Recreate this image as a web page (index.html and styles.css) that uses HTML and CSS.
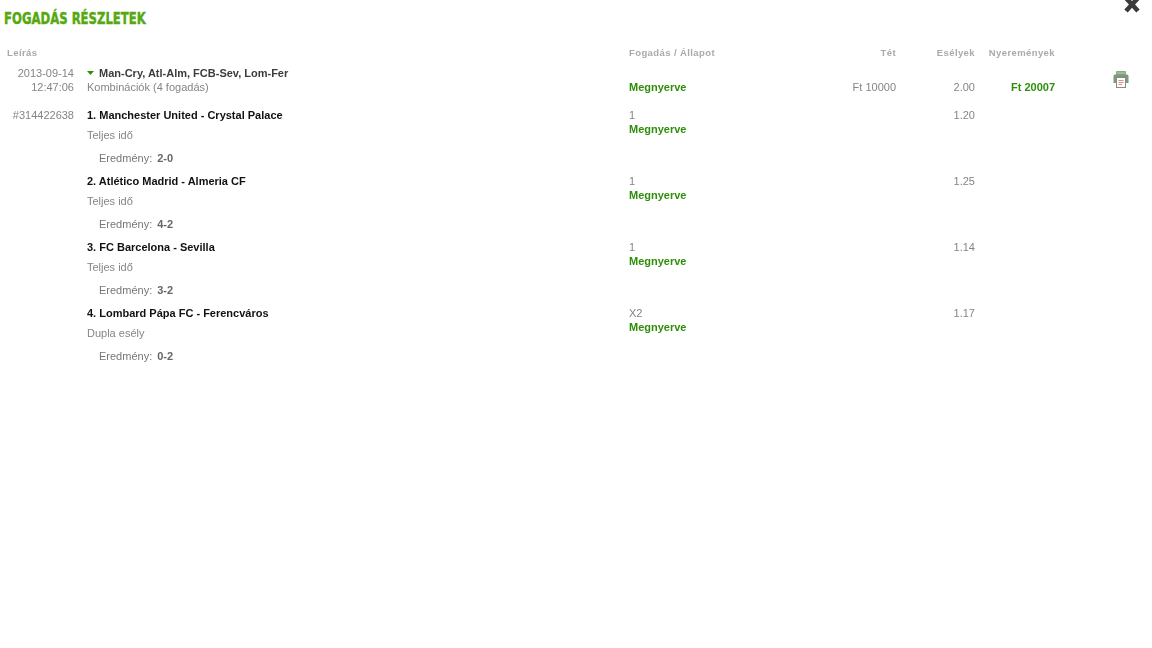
FILE: index.html
```html
<!DOCTYPE html>
<html lang="hu">
<head>
<meta charset="utf-8">
<title>Fogadás részletek</title>
<link rel="stylesheet" href="styles.css">
</head>
<body>
<div class="close"><svg width="16" height="13" viewBox="0 0 16 13"><path d="M2 -2L14 11M14 -2L2 11" stroke="#3a3a3a" stroke-width="4.6" fill="none"/></svg></div>
<h1 class="title"><span class="title-text">FOGADÁS RÉSZLETEK</span></h1>
<div class="grid head">
  <div class="c-a lh">Leírás</div><div></div>
  <div class="lh">Fogadás / Állapot</div>
  <div class="lh r">Tét</div><div class="lh r">Esélyek</div><div class="lh r">Nyeremények</div><div></div>
</div>
<div class="grid summary">
  <div class="r t">2013-09-14<br>12:47:06</div>
  <div><div class="sumtitle"><svg class="arrow" width="7" height="4" viewBox="0 0 7 4"><path d="M0 0H7L3.5 4Z" fill="#2f8f0a"/></svg>Man-Cry, Atl-Alm, FCB-Sev, Lom-Fer</div><div class="t">Kombinációk (4 fogadás)</div></div>
  <div class="won bottom">Megnyerve</div>
  <div class="r t bottom">Ft 10000</div>
  <div class="r t bottom">2.00</div>
  <div class="r won bottom">Ft 20007</div>
  <div class="printer"><svg width="16" height="17" viewBox="0 0 16 17"><path d="M3.5 0.5H12.5V3.5H3.5Z" fill="#9dbb98" stroke="#7c9a78" stroke-width=".8"/><path d="M0.5 5Q0.5 3.5 2 3.5H14Q15.5 3.5 15.5 5V12H0.5Z" fill="#7b9a77"/><rect x="3.5" y="6.5" width="9" height="10" fill="#fff" stroke="#8a8a8a" stroke-width="1"/><path d="M5.5 9.5H10.5M5.5 11.5H10.5M5.5 13.5H9" stroke="#e08a8d" stroke-width="1"/></svg></div>
</div>
<div class="grid row">
  <div class="r t">#314422638</div>
  <div><div class="ev">1. Manchester United - Crystal Palace</div><div class="t sub">Teljes idő</div><div class="res">Eredmény:<b>2-0</b></div></div>
  <div><div class="t">1</div><div class="won">Megnyerve</div></div>
  <div></div><div class="r t">1.20</div><div></div><div></div>
</div>
<div class="grid row">
  <div></div>
  <div><div class="ev">2. Atlético Madrid - Almeria CF</div><div class="t sub">Teljes idő</div><div class="res">Eredmény:<b>4-2</b></div></div>
  <div><div class="t">1</div><div class="won">Megnyerve</div></div>
  <div></div><div class="r t">1.25</div><div></div><div></div>
</div>
<div class="grid row">
  <div></div>
  <div><div class="ev">3. FC Barcelona - Sevilla</div><div class="t sub">Teljes idő</div><div class="res">Eredmény:<b>3-2</b></div></div>
  <div><div class="t">1</div><div class="won">Megnyerve</div></div>
  <div></div><div class="r t">1.14</div><div></div><div></div>
</div>
<div class="grid row">
  <div></div>
  <div><div class="ev">4. Lombard Pápa FC - Ferencváros</div><div class="t sub">Dupla esély</div><div class="res">Eredmény:<b>0-2</b></div></div>
  <div><div class="t">X2</div><div class="won">Megnyerve</div></div>
  <div></div><div class="r t">1.17</div><div></div><div></div>
</div>
</body>
</html>
```
FILE: styles.css
```css
* { box-sizing: border-box; }
html, body { background: #fff; }
body { margin: 0; height: 648px; overflow: hidden; position: relative; font: 11px/14px "Liberation Sans", Arial, sans-serif; color: #858585; }
.close { position: absolute; left: 1124px; top: 0; line-height: 0; }
.title { margin: 0; padding: 10px 0 0 4px; height: 46px; font: 700 16px/18px "DejaVu Sans", sans-serif; font-stretch: condensed; color: #55a80e; -webkit-text-stroke: .4px #55a80e; }
.title-text { display: inline-block; transform: scaleX(.81); transform-origin: 0 50%; }
.grid { display: grid; grid-template-columns: 74px 542px 213px 67px 79px 80px 1fr; will-change: transform; }
.grid > :nth-child(1) { padding-left: 7px; }
.grid > :nth-child(2) { padding-left: 13px; }
.grid > :nth-child(3) { padding-left: 13px; }
.head { height: 20px; }
.lh { font-size: 9.5px; font-weight: 700; color: #aaa; letter-spacing: .4px; line-height: 14px; }
.r { text-align: right; }
.t { color: #858585; }
.summary { height: 42px; }
.sumtitle { font-weight: 700; color: #3c3c3c; }
.arrow { margin: 0 5px 2px 0; vertical-align: middle; }
.bottom { align-self: start; padding-top: 14px; }
.won { color: #2f8f0a; font-weight: 700; }
.printer { padding: 5px 0 0 58px; line-height: 0; }
.row { height: 66px; }
.ev { font-weight: 700; color: #111; height: 20px; }
.sub { height: 23px; }
.res { padding-left: 12px; color: #777; }
.res b { margin-left: 5px; color: #666; }
```
